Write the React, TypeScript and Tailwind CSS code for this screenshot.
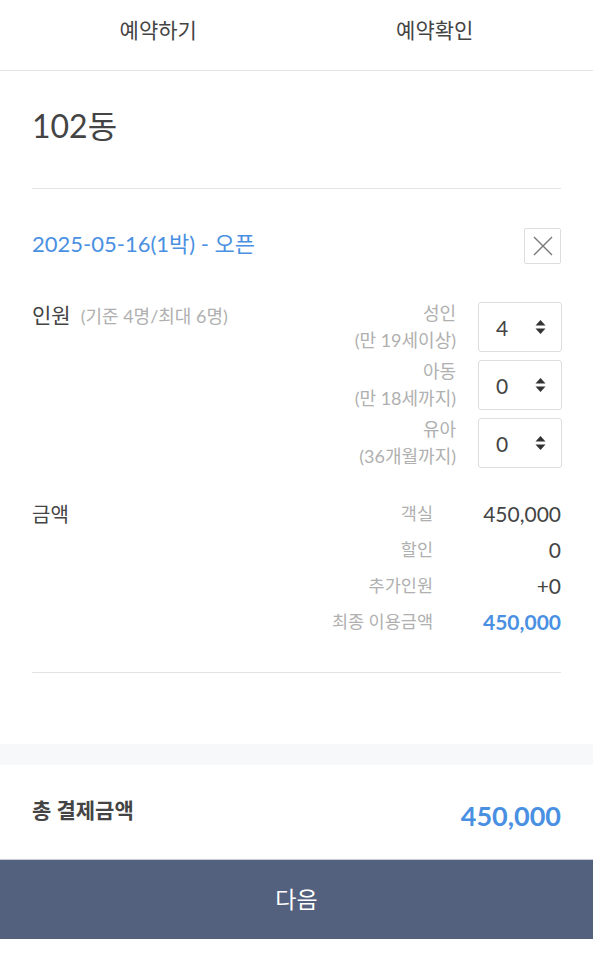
import React from "react";

const FONT = "font-['Lato','Noto_Sans_CJK_KR',sans-serif]";

function Spinner({ value }: { value: string }) {
  return (
    <div className="flex h-[50px] w-[84px] shrink-0 items-center justify-between rounded-[3px] border border-[#dddddd] bg-white pl-[17px] pr-[15px]">
      <span className="text-[21px] leading-none text-[#444444]">{value}</span>
      <svg width="11" height="16" viewBox="0 0 11 16" aria-hidden="true">
        <path d="M5.5 1 L10.5 6.5 L0.5 6.5 Z" fill="#333333" />
        <path d="M5.5 15 L10.5 9.5 L0.5 9.5 Z" fill="#333333" />
      </svg>
    </div>
  );
}

function Guest({ title, sub, value }: { title: string; sub: string; value: string }) {
  return (
    <div className="flex h-[50px] items-center justify-end gap-[22px]">
      <div className="flex flex-col items-end text-[18px] leading-[27px] text-[#b0b0b0]">
        <span>{title}</span>
        <span>{sub}</span>
      </div>
      <Spinner value={value} />
    </div>
  );
}

function AmountRow({ label, value, strong }: { label: string; value: string; strong?: boolean }) {
  return (
    <div className="flex h-[36px] items-center justify-end">
      <span className="text-[17.5px] text-[#b0b0b0]">{label}</span>
      <span
        className={
          strong
            ? "w-[128px] text-right text-[21px] font-bold text-[#4a90e2]"
            : "w-[128px] text-right text-[21px] text-[#444444]"
        }
      >
        {value}
      </span>
    </div>
  );
}

export default function App() {
  return (
    <div className={`${FONT} min-h-[960px] w-full bg-white text-[#444444]`}>
      {/* Tabs */}
      <div className="flex h-[71px] border-b border-[#e3e3e3] px-[20px]">
        <div className="flex flex-1 items-start justify-center pt-[15px] text-[21px] leading-[30px] text-[#444444]">
          예약하기
        </div>
        <div className="flex flex-1 items-start justify-center pt-[15px] text-[21px] leading-[30px] text-[#444444]">
          예약확인
        </div>
      </div>

      <div className="px-[32px]">
        {/* Title */}
        <div className="border-b border-[#e3e3e3] pb-[39px] pt-[32px]">
          <h1 className="text-[32px] leading-[46px] text-[#444444]">102동</h1>
        </div>

        {/* Date row */}
        <div className="mt-[39px] flex h-[36px] items-center justify-between">
          <span className="text-[22px] leading-[30px] text-[#4a90e2] -mt-[4px]">2025-05-16(1박) - 오픈</span>
          <button className="flex h-[36px] w-[37px] items-center justify-center rounded-[2px] border border-[#dddddd] bg-white">
            <svg width="20" height="20" viewBox="0 0 20 20" aria-hidden="true">
              <path d="M1 1 L19 19 M19 1 L1 19" stroke="#777777" strokeWidth="1.4" fill="none" />
            </svg>
          </button>
        </div>

        {/* People */}
        <div className="mt-[38px] flex justify-between">
          <div className="flex items-baseline gap-[10px] leading-[26px]">
            <span className="text-[21px] text-[#444444]">인원</span>
            <span className="text-[18px] text-[#b0b0b0]">(기준 4명/최대 6명)</span>
          </div>
          <div className="mr-[-1px] flex flex-col items-end gap-[8px]">
            <Guest title="성인" sub="(만 19세이상)" value="4" />
            <Guest title="아동" sub="(만 18세까지)" value="0" />
            <Guest title="유아" sub="(36개월까지)" value="0" />
          </div>
        </div>

        {/* Amounts */}
        <div className="mt-[28px] flex justify-between border-b border-[#e3e3e3] pb-[32px]">
          <span className="text-[20px] leading-[36px] text-[#444444]">금액</span>
          <div className="flex flex-col">
            <AmountRow label="객실" value="450,000" />
            <AmountRow label="할인" value="0" />
            <AmountRow label="추가인원" value="+0" />
            <AmountRow label="최종 이용금액" value="450,000" strong />
          </div>
        </div>
      </div>

      {/* Gray band */}
      <div className="mt-[71px] h-[21px] bg-[#f7f8fa]" />

      {/* Total */}
      <div className="flex h-[94px] items-center justify-between px-[32px]">
        <span className="-mt-[4px] text-[21px] font-bold text-[#444444]">총 결제금액</span>
        <span className="pt-[8px] text-[27px] font-bold text-[#4a90e2]">450,000</span>
      </div>

      {/* Button */}
      <button className="flex h-[80px] w-full items-center justify-center border-t border-[#c8ccd4] bg-[#53617e] text-[23px] text-white">
        다음
      </button>
    </div>
  );
}
